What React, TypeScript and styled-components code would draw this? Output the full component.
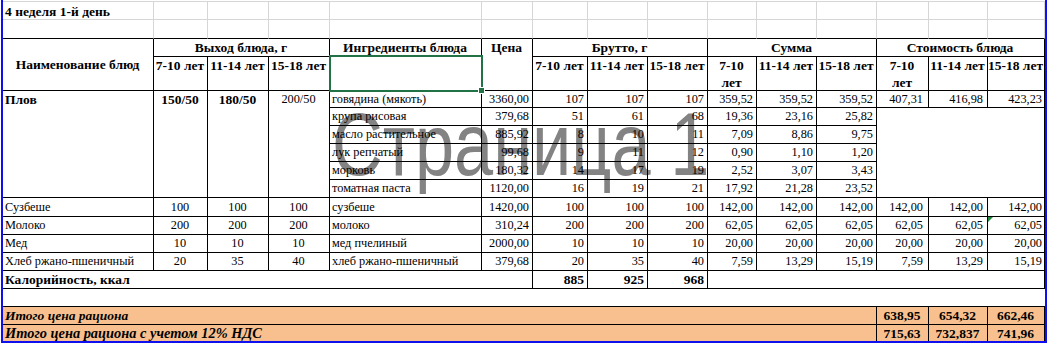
import styled, { createGlobalStyle } from 'styled-components'

const GlobalStyle = createGlobalStyle`
  html, body {
    margin: 0;
    padding: 0;
    background: #ffffff;
  }
`

const SERIF = '"Liberation Serif", "Times New Roman", Times, serif'

const COLS = [151, 54, 61, 61, 152, 51, 55, 60, 60, 49, 60, 60, 52, 59, 57]
const ROWS = [19, 19, 18, 34, 17, 18, 18, 18, 18, 18, 19, 18, 18, 18, 18, 18, 18, 16]

const REG = 12.3
const BOLD = 13.5
const ORANGE = '#f8c08f'
const PAGE_BLUE = '#1010ee'
const GRIDLINE = '#d6d6d6'

const Page = styled.div`
  position: relative;
  width: ${COLS.reduce((a, b) => a + b, 0)}px;
  margin-left: 1px;
  padding-top: 1px;
  border-left: 2px solid ${PAGE_BLUE};
  border-right: 2px solid ${PAGE_BLUE};
  border-bottom: 2px solid ${PAGE_BLUE};
  font-family: ${SERIF};
  color: #000;
`

// page-break preview label, drawn under the cells
const Watermark = styled.div`
  position: absolute;
  left: 329px;
  top: 100px;
  z-index: 0;
  font-family: "Liberation Sans", Arial, sans-serif;
  font-size: 89px;
  line-height: 89px;
  color: #838383;
  white-space: nowrap;
  pointer-events: none;
  transform-origin: left top;
  transform: scaleX(0.79);
`

const Sheet = styled.div`
  position: relative;
  z-index: 1;
  display: grid;
  grid-template-columns: ${COLS.map((w) => `${w}px`).join(' ')};
  grid-template-rows: ${ROWS.map((h) => `${h}px`).join(' ')};
  font-family: ${SERIF};
`

type CellProps = {
  $c: number
  $r: number
  $cs?: number
  $rs?: number
  $h?: 'left' | 'center' | 'right'
  $v?: 'top' | 'center' | 'bottom'
  $bd?: string
  $bold?: boolean
  $italic?: boolean
  $size?: number
  $fill?: string
  $pr?: number
}

const flexH = { left: 'flex-start', center: 'center', right: 'flex-end' }
const flexV = { top: 'flex-start', center: 'center', bottom: 'flex-end' }

const Cell = styled.div<CellProps>`
  position: relative;
  box-sizing: border-box;
  grid-column: ${(p) => p.$c} / span ${(p) => p.$cs ?? 1};
  grid-row: ${(p) => p.$r} / span ${(p) => p.$rs ?? 1};
  display: flex;
  justify-content: ${(p) => flexH[p.$h ?? 'left']};
  align-items: ${(p) => flexV[p.$v ?? 'center']};
  padding: 0 ${(p) => p.$pr ?? 3}px 0 2px;
  border-right: ${(p) => (p.$bd?.includes('r') ? '1px solid #000' : '0')};
  border-bottom: ${(p) => (p.$bd?.includes('b') ? '1px solid #000' : '0')};
  background: ${(p) => p.$fill ?? 'transparent'};
  font-family: ${SERIF};
  font-size: ${(p) => p.$size ?? (p.$bold ? BOLD : REG)}px;
  font-weight: ${(p) => (p.$bold ? 700 : 400)};
  font-style: ${(p) => (p.$italic ? 'italic' : 'normal')};
  line-height: 17px;
  white-space: nowrap;
  text-align: ${(p) => p.$h ?? 'left'};
`

const Blank = styled.div<{ $c: number; $r: number; $edge?: boolean }>`
  box-sizing: border-box;
  grid-column: ${(p) => p.$c};
  grid-row: ${(p) => p.$r};
  border-right: 1px solid ${GRIDLINE};
  border-top: ${(p) => (p.$r === 1 ? `1px solid ${GRIDLINE}` : '0')};
  border-bottom: 1px solid ${(p) => (p.$edge ? '#000' : GRIDLINE)};
`

const Title = styled.div`
  grid-column: 1 / span 3;
  grid-row: 1;
  z-index: 1;
  box-sizing: border-box;
  padding: 3px 0 0 2px;
  font-family: ${SERIF};
  font-size: ${BOLD}px;
  font-weight: 700;
  line-height: 16px;
  white-space: nowrap;
`

const Selection = styled.div`
  position: relative;
  grid-column: 5;
  grid-row: 4;
  margin: -2px -1px -1px -1px;
  border: 2px solid #217346;
  z-index: 3;
`

const Handle = styled.span`
  position: absolute;
  right: -4px;
  bottom: -4px;
  width: 5px;
  height: 5px;
  background: #217346;
  border: 1px solid #ffffff;
`

const ErrorMark = styled.span`
  position: absolute;
  left: 0;
  top: 0;
  width: 0;
  height: 0;
  border-top: 5px solid #1e8a3c;
  border-right: 5px solid transparent;
`

const Lines = styled.span`
  display: block;
  text-align: center;
`

const ingredients = [
  ['говядина (мякоть)', '3360,00', '107', '107', '107', '359,52', '359,52', '359,52'],
  ['крупа рисовая', '379,68', '51', '61', '68', '19,36', '23,16', '25,82'],
  ['масло растительное', '885,92', '8', '10', '11', '7,09', '8,86', '9,75'],
  ['лук репчатый', '99,68', '9', '11', '12', '0,90', '1,10', '1,20'],
  ['морковь', '180,32', '14', '17', '19', '2,52', '3,07', '3,43'],
  ['томатная паста', '1120,00', '16', '19', '21', '17,92', '21,28', '23,52'],
]

const dishes = [
  {
    name: 'Сузбеше',
    out: ['100', '100', '100'],
    ing: 'сузбеше',
    price: '1420,00',
    gross: ['100', '100', '100'],
    sum: ['142,00', '142,00', '142,00'],
    cost: ['142,00', '142,00', '142,00'],
  },
  {
    name: 'Молоко',
    out: ['200', '200', '200'],
    ing: 'молоко',
    price: '310,24',
    gross: ['200', '200', '200'],
    sum: ['62,05', '62,05', '62,05'],
    cost: ['62,05', '62,05', '62,05'],
    flag: true,
  },
  {
    name: 'Мед',
    out: ['10', '10', '10'],
    ing: 'мед пчелиный',
    price: '2000,00',
    gross: ['10', '10', '10'],
    sum: ['20,00', '20,00', '20,00'],
    cost: ['20,00', '20,00', '20,00'],
  },
  {
    name: 'Хлеб ржано-пшеничный',
    out: ['20', '35', '40'],
    ing: 'хлеб ржано-пшеничный',
    price: '379,68',
    gross: ['20', '35', '40'],
    sum: ['7,59', '13,29', '15,19'],
    cost: ['7,59', '13,29', '15,19'],
  },
]

const ages = ['7-10 лет', '11-14 лет', '15-18 лет']
const costPad = [5, 4, 2]

function App() {
  return (
    <>
      <GlobalStyle />
      <Page>
        <Watermark>Страница 1</Watermark>
        <Sheet>
          {/* rows 1-2: plain sheet gridlines */}
          {[1, 2].map((r) =>
            COLS.map((_, i) => <Blank key={`g${r}-${i}`} $c={i + 1} $r={r} $edge={r === 2} />)
          )}
          <Title>4 неделя 1-й день</Title>

          {/* header */}
          <Cell $c={1} $r={3} $rs={2} $h="center" $bd="rb" $bold>
            Наименование блюд
          </Cell>
          <Cell $c={2} $r={3} $cs={3} $h="center" $bd="rb" $bold>
            Выход блюда, г
          </Cell>
          <Cell $c={5} $r={3} $h="center" $bd="rb" $bold>
            Ингредиенты блюда
          </Cell>
          <Cell $c={6} $r={3} $rs={2} $h="center" $v="top" $bd="rb" $bold>
            Цена
          </Cell>
          <Cell $c={7} $r={3} $cs={3} $h="center" $bd="rb" $bold>
            Брутто, г
          </Cell>
          <Cell $c={10} $r={3} $cs={3} $h="center" $bd="rb" $bold>
            Сумма
          </Cell>
          <Cell $c={13} $r={3} $cs={3} $h="center" $bd="rb" $bold>
            Стоимость блюда
          </Cell>

          {ages.map((a, i) => (
            <Cell key={`ab${i}`} $c={2 + i} $r={4} $h="center" $v="top" $bd="rb" $bold>
              {a}
            </Cell>
          ))}
          <Cell $c={5} $r={4} $bd="rb" />
          <Selection>
            <Handle />
          </Selection>
          {ages.map((a, i) => (
            <Cell key={`ag${i}`} $c={7 + i} $r={4} $h="center" $v="top" $bd="rb" $bold>
              {a}
            </Cell>
          ))}
          {[10, 13].map((c) =>
            ages.map((a, i) => (
              <Cell key={`as${c}-${i}`} $c={c + i} $r={4} $h="center" $v="top" $bd="rb" $bold>
                {i === 0 ? (
                  <Lines>
                    7-10
                    <br />
                    лет
                  </Lines>
                ) : (
                  a
                )}
              </Cell>
            ))
          )}

          {/* плов */}
          <Cell $c={1} $r={5} $rs={6} $v="top" $bd="rb" $bold>
            Плов
          </Cell>
          <Cell $c={2} $r={5} $rs={6} $h="center" $v="top" $bd="rb" $bold>
            150/50
          </Cell>
          <Cell $c={3} $r={5} $rs={6} $h="center" $v="top" $bd="rb" $bold>
            180/50
          </Cell>
          <Cell $c={4} $r={5} $rs={6} $h="center" $v="top" $bd="rb">
            200/50
          </Cell>
          {ingredients.map((row, k) =>
            row.map((v, j) => (
              <Cell key={`i${k}-${j}`} $c={5 + j} $r={5 + k} $h={j === 0 ? 'left' : 'right'} $bd="rb">
                {v}
              </Cell>
            ))
          )}
          {['407,31', '416,98', '423,23'].map((v, i) => (
            <Cell key={`pc${i}`} $c={13 + i} $r={5} $h="right" $pr={costPad[i]} $bd="rb">
              {v}
            </Cell>
          ))}
          <Cell $c={13} $r={6} $cs={3} $rs={5} $bd="rb" />

          {/* остальные блюда */}
          {dishes.map((d, k) => {
            const r = 11 + k
            return [
              <Cell key={`n${k}`} $c={1} $r={r} $bd="rb">
                {d.name}
              </Cell>,
              ...d.out.map((v, i) => (
                <Cell key={`o${k}-${i}`} $c={2 + i} $r={r} $h="center" $bd="rb">
                  {v}
                </Cell>
              )),
              <Cell key={`e${k}`} $c={5} $r={r} $bd="rb">
                {d.ing}
              </Cell>,
              <Cell key={`p${k}`} $c={6} $r={r} $h="right" $bd="rb">
                {d.price}
              </Cell>,
              ...[...d.gross, ...d.sum].map((v, i) => (
                <Cell key={`s${k}-${i}`} $c={7 + i} $r={r} $h="right" $bd="rb">
                  {v}
                </Cell>
              )),
              ...d.cost.map((v, i) => (
                <Cell key={`c${k}-${i}`} $c={13 + i} $r={r} $h="right" $pr={costPad[i]} $bd="rb">
                  {d.flag && i === 2 && <ErrorMark />}
                  {v}
                </Cell>
              )),
            ]
          })}

          {/* калорийность */}
          <Cell $c={1} $r={15} $cs={6} $bd="rb" $bold>
            Калорийность, ккал
          </Cell>
          {['885', '925', '968'].map((v, i) => (
            <Cell key={`k${i}`} $c={7 + i} $r={15} $h="right" $bd="rb" $bold>
              {v}
            </Cell>
          ))}
          <Cell $c={10} $r={15} $cs={6} $bd="rb" />
          <Cell $c={1} $r={16} $cs={15} $bd="b" />

          {/* итоги */}
          <Cell $c={1} $r={17} $cs={12} $bd="rb" $fill={ORANGE} $bold $italic>
            Итого цена рациона
          </Cell>
          {['638,95', '654,32', '662,46'].map((v, i) => (
            <Cell key={`t${i}`} $c={13 + i} $r={17} $h="center" $bd="rb" $fill={ORANGE} $bold>
              {v}
            </Cell>
          ))}
          <Cell $c={1} $r={18} $cs={12} $bd="r" $fill={ORANGE} $bold $italic $size={14.4}>
            Итого цена рациона с учетом 12% НДС
          </Cell>
          {['715,63', '732,837', '741,96'].map((v, i) => (
            <Cell key={`v${i}`} $c={13 + i} $r={18} $h="center" $bd="r" $fill={ORANGE} $bold>
              {v}
            </Cell>
          ))}
        </Sheet>
      </Page>
    </>
  )
}

export default App
